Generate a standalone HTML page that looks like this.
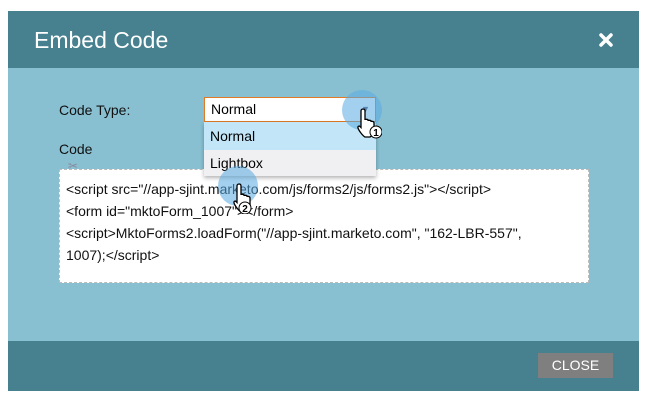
<!DOCTYPE html>
<html><head><style>
body{margin:0;width:649px;height:402px;background:#fff;position:relative;overflow:hidden;font-family:"Liberation Sans",sans-serif}
.dlg{position:absolute;left:8px;top:11px;width:631px;height:380px;background:#88c0d2}
.hdr{position:absolute;left:0;top:0;width:631px;height:57px;background:#47808f}
.hdr .t{position:absolute;left:26px;top:16px;color:#fff;font-size:23px}
.ftr{position:absolute;left:0;top:330px;width:631px;height:50px;background:#47808f}
.btn{position:absolute;left:530px;top:12px;width:75px;height:25px;background:#7f7f7f;color:#fff;font-size:14px;text-align:center;line-height:25px}
.lbl{position:absolute;font-size:14px;color:#111}
.code{position:absolute;left:51px;top:158px;width:530px;height:114px;background:#fff;border:1px dashed #bbb;font-size:14px;line-height:22px;padding:8px 0 0 6px;box-sizing:border-box;color:#111;white-space:nowrap}
.sel{position:absolute;left:196px;top:86px;width:172px;height:25px;background:#fff;border:1px solid #e07a25;box-sizing:border-box;font-size:14px;line-height:23px;padding-left:6px}
.opts{position:absolute;left:196px;top:111px;width:172px;height:54px;box-shadow:0 2px 4px rgba(0,0,0,.3);font-size:14px}
.o1{height:28px;background:#c2e6f7;line-height:28px;padding-left:6px}
.o2{height:26px;background:#f0f0f2;line-height:26px;padding-left:6px}
.circ{position:absolute;width:40px;height:40px;border-radius:50%;background:rgba(90,170,225,.55)}
.hand{position:absolute;width:26px;height:32px}
</style></head><body>
<div class="dlg">
<div class="hdr"><div class="t">Embed Code</div>
<svg style="position:absolute;left:591px;top:22px" width="14" height="14" viewBox="0 0 14 14"><path d="M2 2L12 12M12 2L2 12" stroke="#fff" stroke-width="3.5" stroke-linecap="round"/></svg></div>
<div class="lbl" style="left:51px;top:91px">Code Type:</div>
<div class="lbl" style="left:51px;top:130px">Code</div>
<div style="position:absolute;left:60px;top:148px;font-size:12px;color:#889">✂</div>
<div class="code">&lt;script src="//app-sjint.marketo.com/js/forms2/js/forms2.js"&gt;&lt;/script&gt;<br>&lt;form id="mktoForm_1007"&gt;&lt;/form&gt;<br>&lt;script&gt;MktoForms2.loadForm("//app-sjint.marketo.com", "162-LBR-557",<br>1007);&lt;/script&gt;</div>
<div class="sel">Normal<span style="position:absolute;right:5px;top:0;font-size:9px;color:#557">▼</span></div>
<div class="opts"><div class="o1">Normal</div><div class="o2">Lightbox</div></div>
<div class="circ" style="left:334px;top:79px"></div>
<div class="circ" style="left:210px;top:155px"></div>
<svg class="hand" style="left:348px;top:96px" viewBox="0 0 26 32"><path d="M7 2c1.5 0 2 1 2 2v9c0-1 3-1 3 0v1c0-1 3-1 3 0v1c0-1 3-1 3 1v7c0 3-2 6-4 7H9c-2-1-6-6-7-9-.5-1.5 1-2.5 2-1.5l1 1V4c0-1 .5-2 2-2z" fill="#fff" stroke="#000" stroke-width="1.3"/><circle cx="20" cy="25" r="6" fill="#fff" stroke="#000" stroke-width="1"/><text x="20" y="29" font-size="10" font-weight="bold" text-anchor="middle" font-family="Liberation Sans">1</text></svg>
<svg class="hand" style="left:224px;top:171px" viewBox="0 0 26 32"><path d="M7 2c1.5 0 2 1 2 2v9c0-1 3-1 3 0v1c0-1 3-1 3 0v1c0-1 3-1 3 1v7c0 3-2 6-4 7H9c-2-1-6-6-7-9-.5-1.5 1-2.5 2-1.5l1 1V4c0-1 .5-2 2-2z" fill="#fff" stroke="#000" stroke-width="1.3"/><circle cx="13" cy="26" r="6" fill="#fff" stroke="#000" stroke-width="1"/><text x="13" y="30" font-size="10" font-weight="bold" text-anchor="middle" font-family="Liberation Sans">2</text></svg>
<div class="ftr"><div class="btn">CLOSE</div></div>
</div>
</body></html>
